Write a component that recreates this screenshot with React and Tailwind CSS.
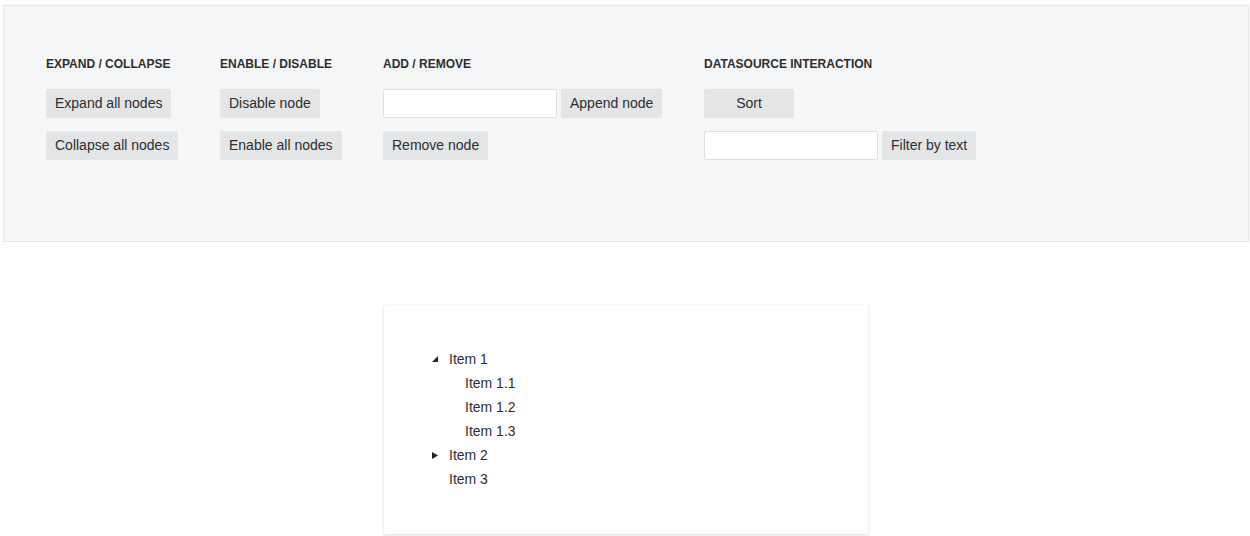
const Btn = ({ children, className = "" }) => (
  <button className={`h-[29px] px-[9px] rounded-[2px] bg-[#e4e5e7] text-[14px] text-[#2e2e2e] ${className}`}>
    {children}
  </button>
);

const Field = ({ className = "" }) => (
  <input className={`h-[29px] w-[174px] rounded-[2px] border border-[#dedfe2] bg-white px-2 text-[14px] outline-none ${className}`} />
);

const Heading = ({ children }) => (
  <div className="h-[16px] text-[12px] font-bold leading-[16px] text-[#2e2e2e]">{children}</div>
);

const Expanded = () => (
  <svg width="8" height="8" viewBox="0 0 8 8">
    <polygon points="7,1 7,7 1,7" fill="#222" />
  </svg>
);

const Collapsed = () => (
  <svg width="8" height="9" viewBox="0 0 8 9">
    <polygon points="1,1 7,4.5 1,8" fill="#222" />
  </svg>
);

const Node = ({ icon, label, indent }) => (
  <div className="flex h-[24px] items-center pl-[47px]">
    <div className="flex w-[18px] items-center">{icon}</div>
    <span className={indent ? "ml-[16px]" : ""}>{label}</span>
  </div>
);

export default function App() {
  return (
    <div className="min-h-screen bg-white font-['Liberation_Sans',Arial,sans-serif] text-[#2e2e2e]">
      <div className="ml-[3px] mr-[1px] mt-[5px] h-[237px] border border-[#e6e7e9] bg-[#f5f6f8] pl-[42px] pt-[50px]">
        <div className="flex">
          <div className="w-[174px]">
            <Heading>EXPAND / COLLAPSE</Heading>
            <div className="mt-[17px] flex flex-col items-start gap-[13px]">
              <Btn>Expand all nodes</Btn>
              <Btn>Collapse all nodes</Btn>
            </div>
          </div>
          <div className="w-[163px]">
            <Heading>ENABLE / DISABLE</Heading>
            <div className="mt-[17px] flex flex-col items-start gap-[13px]">
              <Btn>Disable node</Btn>
              <Btn>Enable all nodes</Btn>
            </div>
          </div>
          <div className="w-[321px]">
            <Heading>ADD / REMOVE</Heading>
            <div className="mt-[17px] flex flex-col items-start gap-[13px]">
              <div className="flex gap-[4px]">
                <Field />
                <Btn>Append node</Btn>
              </div>
              <Btn>Remove node</Btn>
            </div>
          </div>
          <div>
            <Heading>DATASOURCE INTERACTION</Heading>
            <div className="mt-[17px] flex flex-col items-start gap-[13px]">
              <Btn className="w-[90px]">Sort</Btn>
              <div className="flex gap-[4px]">
                <Field />
                <Btn>Filter by text</Btn>
              </div>
            </div>
          </div>
        </div>
      </div>
      <div className="mt-[63px] flex justify-center pl-[2px]">
        <div className="h-[229px] w-[484px] bg-white pt-[42px] text-[14px] shadow-[0_1px_3px_rgba(0,0,0,0.16)]">
          <Node icon={<Expanded />} label="Item 1" />
          <Node indent label="Item 1.1" />
          <Node indent label="Item 1.2" />
          <Node indent label="Item 1.3" />
          <Node icon={<Collapsed />} label="Item 2" />
          <Node label="Item 3" />
        </div>
      </div>
    </div>
  );
}
